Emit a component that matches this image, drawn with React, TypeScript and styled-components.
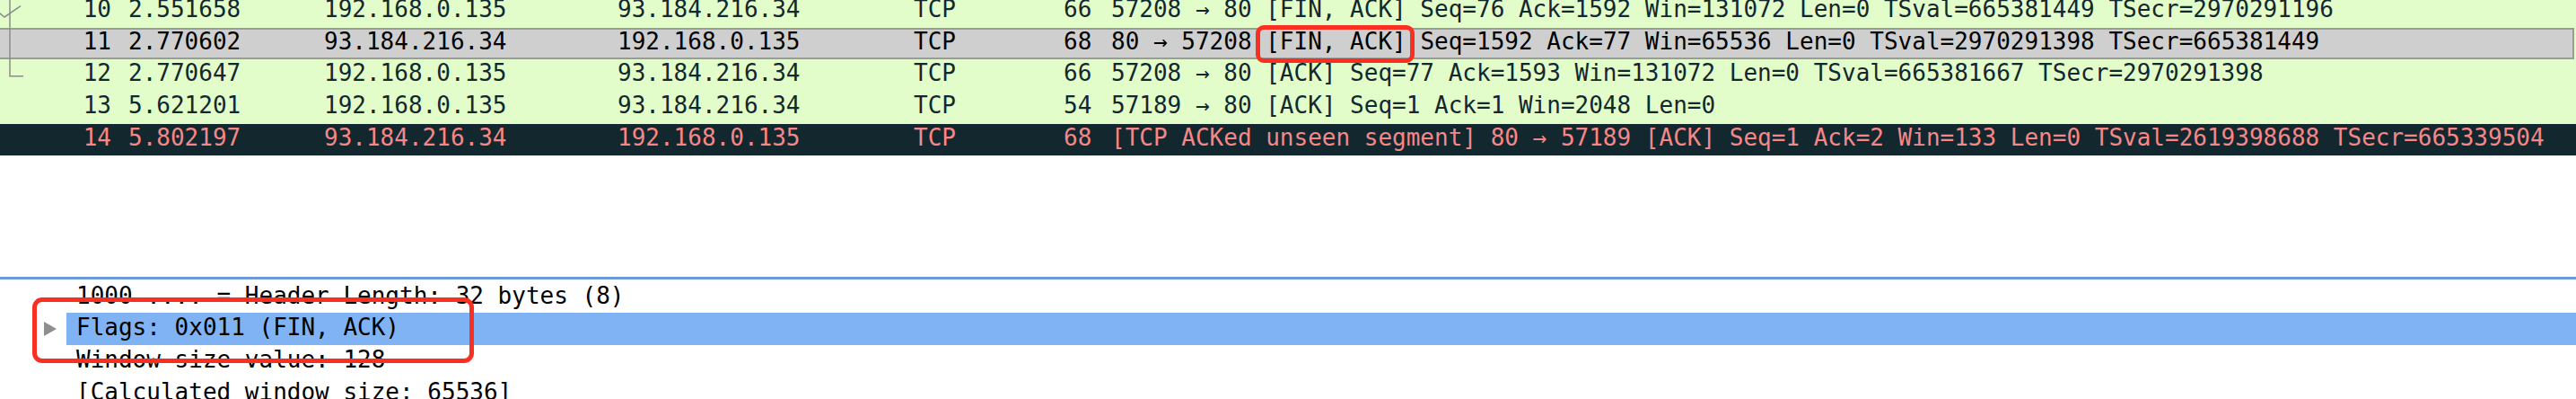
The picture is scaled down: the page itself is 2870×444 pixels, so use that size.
import React from "react";
import styled, { createGlobalStyle, css } from "styled-components";

const GlobalStyle = createGlobalStyle`
  html, body {
    margin: 0;
    padding: 0;
    background: #ffffff;
    width: 2870px;
    height: 444px;
    overflow: hidden;
  }
  body {
    font-family: "DejaVu Sans Mono", "Liberation Mono", monospace;
    font-size: 26px;
  }
`;

const ROW_H = 35.67;

const Page = styled.div`
  display: flex;
  flex-direction: column;
  width: 2870px;
`;

const PacketPane = styled.div`
  display: flex;
  flex-direction: column;
  margin-top: -5px;
  height: 312.7px;
  background: #ffffff;
`;

const RowsBody = styled.div`
  display: flex;
  flex-direction: column;
  background: #e2fdc9;
`;

type Variant = "normal" | "selected" | "bad";

const Row = styled.div<{ $variant: Variant }>`
  display: grid;
  grid-template-columns: 30px 113px 218px 327px 330px 167px 53px 1fr;
  height: ${ROW_H}px;
  box-sizing: border-box;
  line-height: 30px;
  white-space: pre;
  color: #12272e;
  background: #e2fdc9;
  ${(p) =>
    p.$variant === "selected" &&
    css`
      background: #cfcfcf;
      color: #000000;
      margin-right: 2px;
      box-shadow: inset 0 2px #9b9b9b, inset 0 -2px #9b9b9b, inset -2px 0 #9b9b9b;
    `}
  ${(p) =>
    p.$variant === "bad" &&
    css`
      background: #12272e;
      color: #f78787;
    `}
`;

const RelatedCell = styled.div`
  height: ${ROW_H}px;
  svg {
    display: block;
  }
`;

const NumCell = styled.div`
  text-align: right;
  padding-right: 19px;
`;

const Cell = styled.div``;

const InfoCell = styled.div`
  white-space: pre;
`;

const Boxed = styled.span`
  position: relative;
  &::after {
    content: "";
    position: absolute;
    left: -11px;
    right: -9.5px;
    top: -2.6px;
    bottom: -9px;
    border: 5px solid #f92f22;
    border-radius: 9px;
    z-index: 2;
    pointer-events: none;
  }
`;

const Splitter = styled.div`
  height: 3px;
  background: #6c9ad7;
`;

const DetailPane = styled.div`
  display: flex;
  flex-direction: column;
  padding-top: 1.9px;
`;

const DetailRow = styled.div<{ $selected?: boolean; $annotated?: boolean }>`
  display: grid;
  grid-template-columns: 74px 1fr;
  height: 35.7px;
  line-height: 30px;
  white-space: pre;
  color: #000000;
  ${(p) =>
    p.$annotated &&
    css`
      position: relative;
      &::after {
        content: "";
        position: absolute;
        left: 36px;
        top: -17.3px;
        width: 492px;
        height: 73px;
        box-sizing: border-box;
        border: 5px solid #f92f22;
        border-radius: 11px;
        z-index: 2;
        pointer-events: none;
      }
    `}
`;

const Expander = styled.div`
  display: flex;
  align-items: center;
  padding-left: 49px;
  svg {
    display: block;
  }
`;

const DetailLabel = styled.div<{ $selected?: boolean }>`
  padding-left: 11px;
  padding-top: 1px;
  background: ${(p) => (p.$selected ? "#80b3f4" : "transparent")};
`;

type Related = "check" | "line" | "end" | "none";

const RelatedMark: React.FC<{ kind: Related }> = ({ kind }) => {
  const stroke = "#8c8c8c";
  return (
    <svg width={30} height={ROW_H} viewBox={`0 0 30 ${ROW_H}`}>
      {(kind === "check" || kind === "line") && (
        <line x1={11} y1={0} x2={11} y2={ROW_H} stroke={stroke} strokeWidth={1.5} />
      )}
      {kind === "check" && (
        <polyline
          points="-2,18.5 5,24 23,11.7"
          fill="none"
          stroke={stroke}
          strokeWidth={1.5}
        />
      )}
      {kind === "end" && (
        <polyline
          points="11,0 11,18.7 26,18.7"
          fill="none"
          stroke={stroke}
          strokeWidth={1.5}
        />
      )}
    </svg>
  );
};

type Packet = {
  no: number;
  time: string;
  src: string;
  dst: string;
  proto: string;
  len: string;
  info: React.ReactNode;
  variant: Variant;
  related: Related;
};

const packets: Packet[] = [
  {
    no: 10,
    time: "2.551658",
    src: "192.168.0.135",
    dst: "93.184.216.34",
    proto: "TCP",
    len: "66",
    info: "57208 → 80 [FIN, ACK] Seq=76 Ack=1592 Win=131072 Len=0 TSval=665381449 TSecr=2970291196",
    variant: "normal",
    related: "check",
  },
  {
    no: 11,
    time: "2.770602",
    src: "93.184.216.34",
    dst: "192.168.0.135",
    proto: "TCP",
    len: "68",
    info: (
      <>
        {"80 → 57208 "}
        <Boxed>[FIN, ACK]</Boxed>
        {" Seq=1592 Ack=77 Win=65536 Len=0 TSval=2970291398 TSecr=665381449"}
      </>
    ),
    variant: "selected",
    related: "line",
  },
  {
    no: 12,
    time: "2.770647",
    src: "192.168.0.135",
    dst: "93.184.216.34",
    proto: "TCP",
    len: "66",
    info: "57208 → 80 [ACK] Seq=77 Ack=1593 Win=131072 Len=0 TSval=665381667 TSecr=2970291398",
    variant: "normal",
    related: "end",
  },
  {
    no: 13,
    time: "5.621201",
    src: "192.168.0.135",
    dst: "93.184.216.34",
    proto: "TCP",
    len: "54",
    info: "57189 → 80 [ACK] Seq=1 Ack=1 Win=2048 Len=0",
    variant: "normal",
    related: "none",
  },
  {
    no: 14,
    time: "5.802197",
    src: "93.184.216.34",
    dst: "192.168.0.135",
    proto: "TCP",
    len: "68",
    info: "[TCP ACKed unseen segment] 80 → 57189 [ACK] Seq=1 Ack=2 Win=133 Len=0 TSval=2619398688 TSecr=665339504",
    variant: "bad",
    related: "none",
  },
];

const Triangle: React.FC = () => (
  <svg width={14} height={16} viewBox="0 0 14 16">
    <polygon points="0,0 14,8 0,16" fill="#8e8e8e" />
  </svg>
);

type DetailItem = {
  text: string;
  expandable?: boolean;
  selected?: boolean;
  annotated?: boolean;
};

const details: DetailItem[] = [
  { text: "1000 .... = Header Length: 32 bytes (8)" },
  { text: "Flags: 0x011 (FIN, ACK)", expandable: true, selected: true, annotated: true },
  { text: "Window size value: 128" },
  { text: "[Calculated window size: 65536]" },
];

export default function App() {
  return (
    <>
      <GlobalStyle />
      <Page>
        <PacketPane>
          <RowsBody>
            {packets.map((p) => (
              <Row key={p.no} $variant={p.variant}>
                <RelatedCell>
                  <RelatedMark kind={p.related} />
                </RelatedCell>
                <NumCell>{p.no}</NumCell>
                <Cell>{p.time}</Cell>
                <Cell>{p.src}</Cell>
                <Cell>{p.dst}</Cell>
                <Cell>{p.proto}</Cell>
                <Cell>{p.len}</Cell>
                <InfoCell>{p.info}</InfoCell>
              </Row>
            ))}
          </RowsBody>
        </PacketPane>
        <Splitter />
        <DetailPane>
          {details.map((d) => (
            <DetailRow key={d.text} $annotated={d.annotated}>
              <Expander>{d.expandable && <Triangle />}</Expander>
              <DetailLabel $selected={d.selected}>{d.text}</DetailLabel>
            </DetailRow>
          ))}
        </DetailPane>
      </Page>
    </>
  );
}
